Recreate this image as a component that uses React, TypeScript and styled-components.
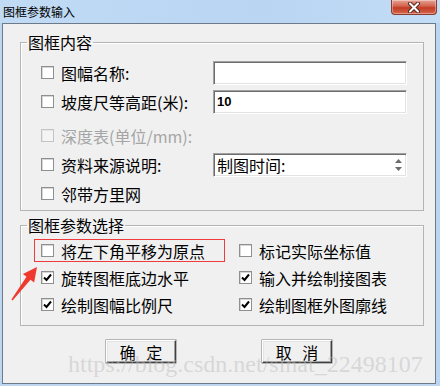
import React from 'react';
import styled, {createGlobalStyle} from 'styled-components';

const GlobalStyle = createGlobalStyle`
  html, body {
    margin: 0;
    padding: 0;
    background: #bcd6f1;
  }
  body {
    font-family: "Noto Sans CJK SC", "Liberation Sans", sans-serif;
  }
`;

const Window = styled.div`
  position: relative;
  width: 440px;
  height: 386px;
  overflow: hidden;
  background: #bcd6f1;
  display: flex;
  flex-direction: column;
`;

const TitleBar = styled.div`
  height: 23px;
  flex-shrink: 0;
  display: flex;
  align-items: flex-start;
  justify-content: space-between;
  background: linear-gradient(to right, #c1dbf5, #b9d5f2 60%, #c3ddf6);
`;

const Title = styled.div`
  font-size: 12px;
  line-height: 14px;
  padding: 5px 0 0 3px;
  color: #000;
`;

const CloseButton = styled.div`
  width: 46px;
  height: 15px;
  margin-right: 3px;
  box-sizing: border-box;
  border: 1px solid #8a3a2e;
  border-top: none;
  border-radius: 0 0 4px 4px;
  background: linear-gradient(#e7a496, #d2604a 45%, #c23c25 55%, #d5664c);
  display: flex;
  align-items: center;
  justify-content: center;
  box-shadow: inset 0 0 0 1px rgba(255, 255, 255, 0.35);
`;

const Client = styled.div`
  width: 434px;
  height: 361px;
  margin-left: 2px;
  box-sizing: border-box;
  border: 1px solid #6c7a8a;
  background: #f0f0f0;
  display: flex;
  flex-direction: column;
  align-items: flex-start;
`;

const Group = styled.fieldset<{$top: number}>`
  margin: ${p => p.$top}px 0 0 17px;
  padding: 0;
  width: 404px;
  box-sizing: border-box;
  border: 1px solid #b4b4b4;
  box-shadow: inset 1px 1px 0 #fff;
  min-width: 0;
`;

const Legend = styled.legend`
  font-size: 16px;
  line-height: 18px;
  padding: 0 1px;
  margin-left: 6px;
  color: #000;
`;

const GroupBody = styled.div<{$pad: string}>`
  padding: ${p => p.$pad};
`;

const Row = styled.div<{$gap?: number}>`
  height: 29px;
  margin-top: ${p => p.$gap ?? 0}px;
  display: flex;
  align-items: center;
`;

const Check = styled.label<{$width?: number; $highlight?: boolean}>`
  position: relative;
  width: ${p => (p.$width ? `${p.$width}px` : 'auto')};
  flex-shrink: 0;
  display: flex;
  align-items: center;
  gap: 7px;
  font-size: 16px;
  line-height: 18px;
  color: #000;

  ${p => p.$highlight && `
    &::after {
      content: '';
      position: absolute;
      left: -7px;
      top: -3px;
      width: 189px;
      height: 21px;
      border: 1.5px solid #ee3b3b;
    }
  `}
`;

const Box = styled.span<{$disabled?: boolean}>`
  width: 13px;
  height: 13px;
  box-sizing: border-box;
  flex-shrink: 0;
  border: 1px solid ${p => (p.$disabled ? '#c4c4c4' : '#8e8f8f')};
  background: ${p => (p.$disabled ? '#f4f4f4' : '#fff')};
  box-shadow: inset 1px 1px 0 ${p => (p.$disabled ? '#e6e6e6' : '#d6d6d6')};
  display: flex;
  align-items: center;
  justify-content: center;
`;

const LabelText = styled.span<{$disabled?: boolean}>`
  color: ${p => (p.$disabled ? '#a5a5a5' : '#000')};
  white-space: nowrap;
`;

const Field = styled.div`
  width: 194px;
  height: 24px;
  box-sizing: border-box;
  border: 1px solid;
  border-color: #a0a0a0 #fff #fff #a0a0a0;
  box-shadow: inset 1px 1px 0 #6d6d6d, inset -1px -1px 0 #e3e3e3;
  background: #fff;
  display: flex;
  align-items: center;
  padding-left: 3px;
`;

const FieldValue = styled.span<{$bold?: boolean}>`
  flex: 1;
  font-family: ${p => (p.$bold ? '"Liberation Sans", Arial, sans-serif' : '"Noto Sans CJK SC", sans-serif')};
  font-weight: ${p => (p.$bold ? 700 : 400)};
  font-size: ${p => (p.$bold ? 13 : 16)}px;
  line-height: 18px;
  color: #000;
`;

const Spinner = styled.div`
  width: 12px;
  height: 20px;
  margin-right: 2px;
  display: flex;
  flex-direction: column;
  align-items: center;
  justify-content: center;
  gap: 4px;
`;

const OptionGrid = styled.div`
  display: grid;
  grid-template-columns: 198px 1fr;
  grid-auto-rows: 27px;
  align-items: center;
`;

const ButtonRow = styled.div`
  align-self: stretch;
  margin-top: 14px;
  display: flex;
  justify-content: center;
  gap: 86px;
`;

const Button = styled.button`
  width: 70px;
  height: 23px;
  box-sizing: border-box;
  padding: 0;
  border: 1px solid;
  border-color: #fff #404040 #404040 #fff;
  box-shadow: inset -1px -1px 0 #a0a0a0, inset 1px 1px 0 #e3e3e3, 0 0 0 0.5px #7a7a7a;
  background: #f0f0f0;
  font-family: "Noto Sans CJK SC", sans-serif;
  font-size: 16px;
  line-height: 18px;
  word-spacing: 7px;
  color: #000;
`;

const Watermark = styled.div`
  position: absolute;
  left: 68px;
  top: 351px;
  font-family: "Liberation Serif", "Times New Roman", serif;
  font-size: 24px;
  color: rgba(190, 190, 190, 0.5);
  white-space: nowrap;
  pointer-events: none;
`;

const Arrow = styled.svg`
  position: absolute;
  left: 0;
  top: 260px;
`;

function CheckMark() {
  return (
    <svg width="9" height="9" viewBox="0 0 9 9">
      <path d="M1 4.5 L3.5 7 L8 1.5" fill="none" stroke="#000" strokeWidth="2"/>
    </svg>
  );
}

function CheckItem({label, checked, disabled, width, highlight}: {
  label: string;
  checked?: boolean;
  disabled?: boolean;
  width?: number;
  highlight?: boolean;
}) {
  return (
    <Check $width={width} $highlight={highlight}>
      <Box $disabled={disabled}>{checked ? <CheckMark/> : null}</Box>
      <LabelText $disabled={disabled}>{label}</LabelText>
    </Check>
  );
}

const options = [
  {label: '将左下角平移为原点', checked: false, highlight: true},
  {label: '标记实际坐标值', checked: false},
  {label: '旋转图框底边水平', checked: true},
  {label: '输入并绘制接图表', checked: true},
  {label: '绘制图幅比例尺', checked: true},
  {label: '绘制图框外图廓线', checked: true},
];

export default function App() {
  return (
    <Window>
      <GlobalStyle/>
      <TitleBar>
        <Title>图框参数输入</Title>
        <CloseButton>
          <svg width="14" height="11" viewBox="0 0 14 11">
            <path d="M3 1.5 L11 9.5 M11 1.5 L3 9.5" stroke="#5a2a22" strokeWidth="4" strokeLinecap="round"/>
            <path d="M3 1.5 L11 9.5 M11 1.5 L3 9.5" stroke="#fff" strokeWidth="2" strokeLinecap="round"/>
          </svg>
        </CloseButton>
      </TitleBar>

      <Client>
        <Group $top={9}>
          <Legend>图框内容</Legend>
          <GroupBody $pad="7px 0 2px 20px">
            <Row>
              <CheckItem label="图幅名称:" width={172}/>
              <Field/>
            </Row>
            <Row>
              <CheckItem label="坡度尺等高距(米):" width={172}/>
              <Field><FieldValue $bold>10</FieldValue></Field>
            </Row>
            <Row $gap={5}>
              <CheckItem label="深度表(单位/mm):" width={172} disabled/>
            </Row>
            <Row>
              <CheckItem label="资料来源说明:" width={172}/>
              <Field>
                <FieldValue>制图时间:</FieldValue>
                <Spinner>
                  <svg width="7" height="4" viewBox="0 0 7 4"><path d="M0 4 L3.5 0 L7 4 Z" fill="#6a6a6a"/></svg>
                  <svg width="7" height="4" viewBox="0 0 7 4"><path d="M0 0 L3.5 4 L7 0 Z" fill="#6a6a6a"/></svg>
                </Spinner>
              </Field>
            </Row>
            <Row>
              <CheckItem label="邻带方里网"/>
            </Row>
          </GroupBody>
        </Group>

        <Group $top={5}>
          <Legend>图框参数选择</Legend>
          <GroupBody $pad="3px 0 7px 20px">
            <OptionGrid>
              {options.map(o => (
                <CheckItem key={o.label} label={o.label} checked={o.checked} highlight={o.highlight}/>
              ))}
            </OptionGrid>
          </GroupBody>
        </Group>

        <ButtonRow>
          <Button>确 定</Button>
          <Button>取 消</Button>
        </ButtonRow>
      </Client>

      <Watermark>https://blog.csdn.net/sinat_22498107</Watermark>
      <Arrow width="40" height="45" viewBox="0 260 40 45">
        <polygon
          points="37,267 34.1,282.4 30.5,279.7 12.6,300.4 11.4,299.6 26.5,276.7 22.9,274"
          fill="#f0392e"
        />
      </Arrow>
    </Window>
  );
}
